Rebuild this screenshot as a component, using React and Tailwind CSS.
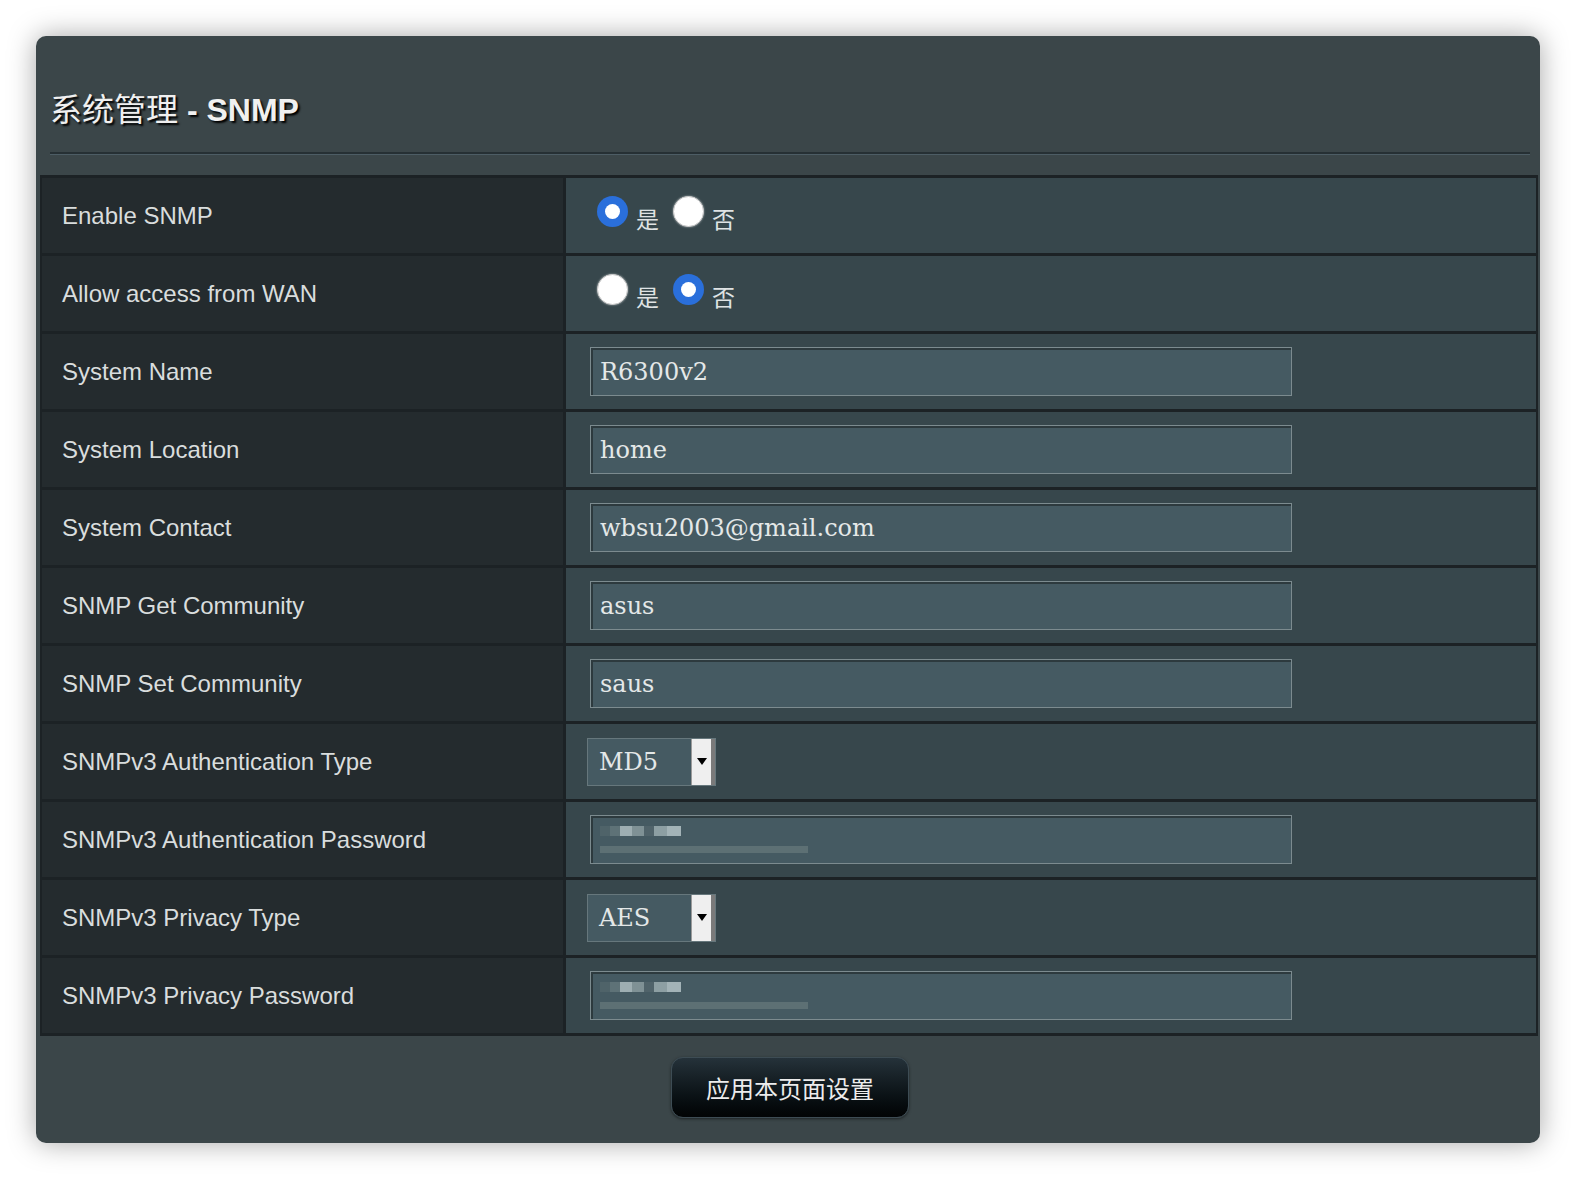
import React from 'react';

const sans = "font-['Liberation_Sans','Noto_Sans_CJK_SC',sans-serif]";
const serif = "font-['DejaVu_Serif','Noto_Sans_CJK_SC',serif]";
const cjk = "font-['Noto_Sans_CJK_SC',sans-serif]";

function Radio({ checked, className = '' }) {
  return checked ? (
    <span className={`mb-[9px] flex h-[31px] w-[31px] shrink-0 items-center justify-center rounded-full bg-[#2a6fdb] ${className}`}>
      <span className="h-[15px] w-[15px] rounded-full bg-white" />
    </span>
  ) : (
    <span className={`mb-[9px] h-[31px] w-[31px] shrink-0 rounded-full border border-[#c9c9c9] bg-white shadow-[0_0_2px_rgba(255,255,255,0.6)] ${className}`} />
  );
}

function RadioPair({ yes }) {
  return (
    <div className="flex items-center pl-[31px]">
      <Radio checked={yes} />
      <span className={`${cjk} ml-[8px] mt-[6px] text-[23px] leading-none text-[#dfe3e4]`}>是</span>
      <Radio checked={!yes} className="ml-[14px]" />
      <span className={`${cjk} ml-[8px] mt-[6px] text-[23px] leading-none text-[#dfe3e4]`}>否</span>
    </div>
  );
}

function TextInput({ value }) {
  return (
    <div className="ml-[24px] flex h-[49px] w-[702px] items-center border border-[#7c8b8f] bg-[#455a62] pl-[9px] shadow-[inset_2px_2px_0_#2d3a3e]">
      <span className={`${serif} text-[24px] leading-none text-[#e4e8e8]`}>{value}</span>
    </div>
  );
}

// blurred-out password, drawn as pixel blocks
function HiddenInput() {
  const blocks = [
    ['w-[10px]', 'bg-[#4f6369]'],
    ['w-[10px]', 'bg-[#5e7277]'],
    ['w-[12px]', 'bg-[#9eaeb2]'],
    ['w-[12px]', 'bg-[#7f9195]'],
    ['w-[10px]', 'bg-[#50636a]'],
    ['w-[13px]', 'bg-[#8d9fa3]'],
    ['w-[14px]', 'bg-[#a3b3b7]'],
  ];
  return (
    <div className="ml-[24px] flex h-[49px] w-[702px] flex-col justify-center gap-[10px] border border-[#7c8b8f] bg-[#455a62] pl-[9px] shadow-[inset_2px_2px_0_#2d3a3e]">
      <div className="flex h-[10px]">
        {blocks.map(([w, c], i) => (
          <span key={i} className={`${w} ${c} h-full`} />
        ))}
      </div>
      <div className="h-[7px] w-[208px] bg-[#5d7074]" />
    </div>
  );
}

function Select({ value }) {
  return (
    <div className="ml-[21px] flex h-[48px] w-[129px] border border-[#66777c] bg-[#455a62]">
      <div className="flex flex-1 items-center pl-[11px]">
        <span className={`${serif} text-[24px] leading-none text-[#e4e8e8]`}>{value}</span>
      </div>
      <div className="flex w-[24px] items-center justify-center border-l border-r-[4px] border-l-[#9a9a9a] border-r-[#7a7a7a] bg-[#efefef]">
        <svg width="10" height="7" viewBox="0 0 10 7">
          <path d="M0 0h10L5 7z" fill="#000" />
        </svg>
      </div>
    </div>
  );
}

const rows = [
  { label: 'Enable SNMP', el: <RadioPair yes /> },
  { label: 'Allow access from WAN', el: <RadioPair yes={false} /> },
  { label: 'System Name', el: <TextInput value="R6300v2" /> },
  { label: 'System Location', el: <TextInput value="home" /> },
  { label: 'System Contact', el: <TextInput value="wbsu2003@gmail.com" /> },
  { label: 'SNMP Get Community', el: <TextInput value="asus" /> },
  { label: 'SNMP Set Community', el: <TextInput value="saus" /> },
  { label: 'SNMPv3 Authentication Type', el: <Select value="MD5" /> },
  { label: 'SNMPv3 Authentication Password', el: <HiddenInput /> },
  { label: 'SNMPv3 Privacy Type', el: <Select value="AES" /> },
  { label: 'SNMPv3 Privacy Password', el: <HiddenInput /> },
];

export default function App() {
  return (
    <div className="min-h-screen bg-white p-[36px]">
      <div className="rounded-[10px] bg-[#3b4649] pb-[25px] shadow-[0_0_28px_rgba(0,0,0,0.35)]">
        {/* header */}
        <div className="px-[14px] pt-[54px] pb-[22px]">
          <h1
            className={`${sans} text-[32px] font-bold leading-[40px] text-[#f0f0f0] [text-shadow:2px_2px_2px_#000]`}
          >
            <span className="font-normal">系统管理</span> - SNMP
          </h1>
        </div>
        <div className="ml-[14px] mr-[10px]">
          <div className="h-[2px] bg-[#263034]" />
          <div className="h-px bg-[#4d5d65]" />
        </div>

        {/* settings table */}
        <div className="mt-[20px] ml-[4px] mr-[2px] border-x-2 border-t-[3px] border-[#1c2225]">
          {rows.map((r) => (
            <div key={r.label} className="grid h-[78px] grid-cols-[524px_1fr] border-b-[3px] border-[#1c2225]">
              <div className="flex items-center border-r-[3px] border-[#1c2225] bg-[#242b2e] pl-[20px]">
                <span className={`${sans} text-[24px] text-[#d9dddd]`}>{r.label}</span>
              </div>
              <div className="flex items-center bg-[#37474c]">{r.el}</div>
            </div>
          ))}
        </div>

        {/* apply */}
        <div className="mt-[21px] flex justify-center pl-[4px]">
          <button className="flex h-[61px] w-[238px] items-center justify-center rounded-[12px] border border-[#3d4c54] bg-gradient-to-b from-[#25323a] to-[#020405] shadow-[0_1px_3px_rgba(0,0,0,0.5)]">
            <span className={`${cjk} text-[24px] leading-none text-[#ececec]`}>应用本页面设置</span>
          </button>
        </div>
      </div>
    </div>
  );
}
